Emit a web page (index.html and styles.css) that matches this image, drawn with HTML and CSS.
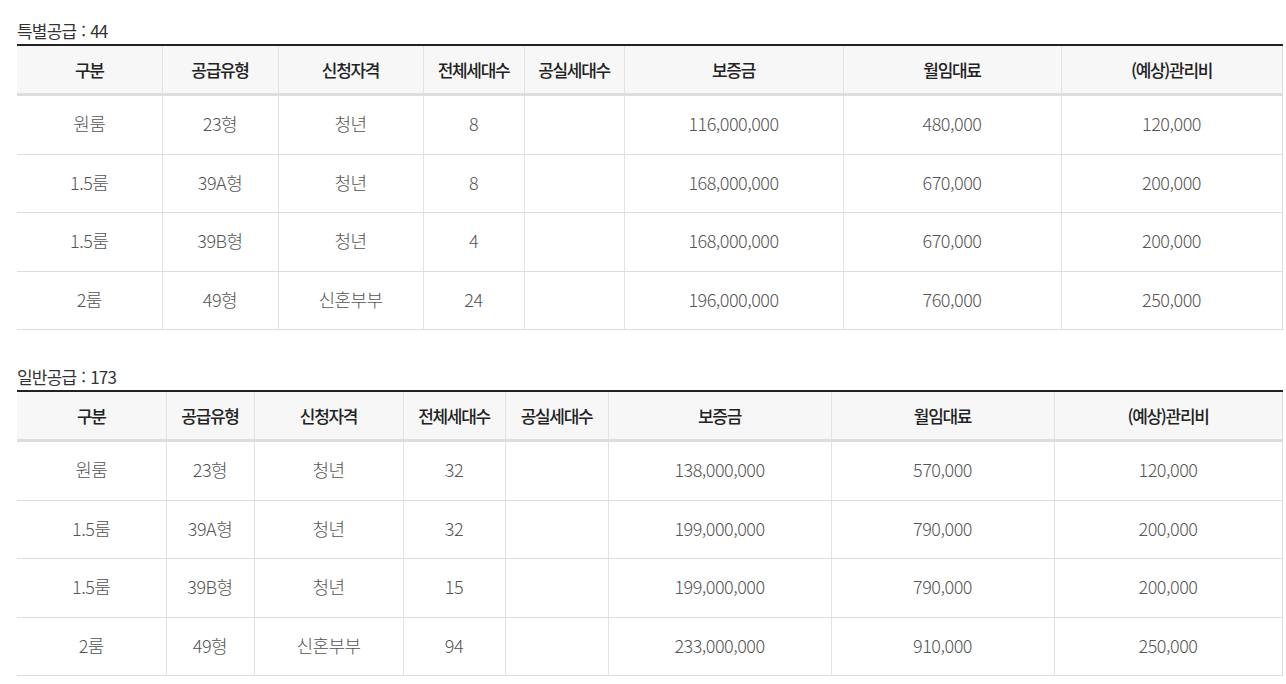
FILE: index.html
```html
<!DOCTYPE html>
<html lang="ko">
<head>
<meta charset="utf-8">
<title>공급 현황</title>
<link rel="stylesheet" href="styles.css">
</head>
<body>
<div class="page">
  <section class="supply supply-special">
    <h3 class="supply-title">특별공급 : 44</h3>
    <table class="supply-table">
      <colgroup>
        <col class="c1"><col class="c2"><col class="c3"><col class="c4"><col class="c5"><col class="c6"><col class="c7"><col class="c8">
      </colgroup>
      <thead>
        <tr><th>구분</th><th>공급유형</th><th>신청자격</th><th>전체세대수</th><th>공실세대수</th><th>보증금</th><th>월임대료</th><th>(예상)관리비</th></tr>
      </thead>
      <tbody>
        <tr><td>원룸</td><td>23형</td><td>청년</td><td>8</td><td></td><td>116,000,000</td><td>480,000</td><td>120,000</td></tr>
        <tr><td>1.5룸</td><td>39A형</td><td>청년</td><td>8</td><td></td><td>168,000,000</td><td>670,000</td><td>200,000</td></tr>
        <tr><td>1.5룸</td><td>39B형</td><td>청년</td><td>4</td><td></td><td>168,000,000</td><td>670,000</td><td>200,000</td></tr>
        <tr><td>2룸</td><td>49형</td><td>신혼부부</td><td>24</td><td></td><td>196,000,000</td><td>760,000</td><td>250,000</td></tr>
      </tbody>
    </table>
  </section>
  <section class="supply supply-general">
    <h3 class="supply-title">일반공급 : 173</h3>
    <table class="supply-table">
      <colgroup>
        <col class="c1"><col class="c2"><col class="c3"><col class="c4"><col class="c5"><col class="c6"><col class="c7"><col class="c8">
      </colgroup>
      <thead>
        <tr><th>구분</th><th>공급유형</th><th>신청자격</th><th>전체세대수</th><th>공실세대수</th><th>보증금</th><th>월임대료</th><th>(예상)관리비</th></tr>
      </thead>
      <tbody>
        <tr><td>원룸</td><td>23형</td><td>청년</td><td>32</td><td></td><td>138,000,000</td><td>570,000</td><td>120,000</td></tr>
        <tr><td>1.5룸</td><td>39A형</td><td>청년</td><td>32</td><td></td><td>199,000,000</td><td>790,000</td><td>200,000</td></tr>
        <tr><td>1.5룸</td><td>39B형</td><td>청년</td><td>15</td><td></td><td>199,000,000</td><td>790,000</td><td>200,000</td></tr>
        <tr><td>2룸</td><td>49형</td><td>신혼부부</td><td>94</td><td></td><td>233,000,000</td><td>910,000</td><td>250,000</td></tr>
      </tbody>
    </table>
  </section>
</div>
</body>
</html>
```
FILE: styles.css
```css
html, body {
  margin: 0;
  padding: 0;
  background: #fff;
}
body {
  font-family: "Noto Sans CJK KR", "Noto Sans", sans-serif;
  color: #666;
  overflow: hidden;
}
.page {
  padding: 19px 0 0 17px;
  width: 1265px;
}
.supply + .supply {
  margin-top: 35px;
}
.supply-title {
  margin: 0;
  height: 25px;
  line-height: 24px;
  font-size: 17px;
  font-weight: 400;
  color: #333;
  letter-spacing: -0.8px;
  word-spacing: 1px;
}
.supply-table {
  width: 1265px;
  table-layout: fixed;
  border-collapse: collapse;
  border-top: 2px solid #222;
  border-right: 1px solid #ddd;
}
.supply-table th {
  height: 46px;
  padding: 0 0 1px;
  background: #f7f7f7;
  font-size: 17px;
  font-weight: 500;
  color: #222;
  letter-spacing: -1.3px;
  border-bottom: 3px solid #ddd;
  border-left: 1px solid #e3e3e3;
  text-align: center;
}
.supply-table td {
  height: 54.5px;
  padding: 0 0 3px;
  font-size: 18px;
  font-weight: 300;
  color: #555;
  letter-spacing: -0.5px;
  text-align: center;
  border-bottom: 1px solid #ddd;
  border-left: 1px solid #e3e3e3;
}
.supply-table th:first-child,
.supply-table td:first-child {
  border-left: 0;
}
.supply-special .c1 { width: 145px; }
.supply-special .c2 { width: 116px; }
.supply-special .c3 { width: 145px; }
.supply-special .c4 { width: 101px; }
.supply-special .c5 { width: 100px; }
.supply-special .c6 { width: 219px; }
.supply-special .c7 { width: 218px; }
.supply-special .c8 { width: 221px; }
.supply-general .c1 { width: 149px; }
.supply-general .c2 { width: 88px; }
.supply-general .c3 { width: 149px; }
.supply-general .c4 { width: 102px; }
.supply-general .c5 { width: 103px; }
.supply-general .c6 { width: 223px; }
.supply-general .c7 { width: 223px; }
.supply-general .c8 { width: 228px; }
```
